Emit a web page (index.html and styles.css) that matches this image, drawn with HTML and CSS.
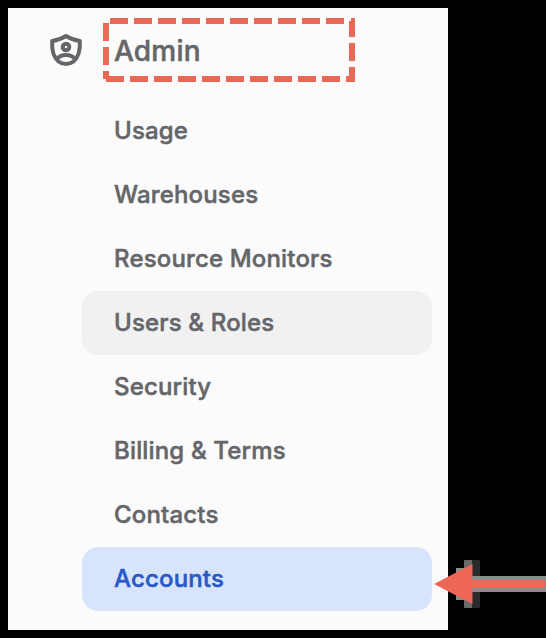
FILE: index.html
```
<!DOCTYPE html>
<html lang="en">
<head>
<meta charset="utf-8">
<title>Admin</title>
<link rel="stylesheet" href="styles.css">
</head>
<body>
<nav class="sidebar">
  <div class="section">
    <svg class="shield" width="34" height="36" viewBox="0 0 34 36" fill="none" stroke="currentColor" stroke-width="4" stroke-linejoin="round">
      <path d="M17 4C13.5 6.3 8.5 8.2 3.2 9C2.6 18 4.7 25.3 9.5 29.5Q12.6 32 17 32Q21.4 32 24.5 29.5C29.3 25.3 31.4 18 30.8 9C25.5 8.2 20.5 6.3 17 4Z"/>
      <circle cx="17" cy="15" r="3.3"/>
      <path d="M8.5 26.5Q11.5 23 17 23T25.5 26.5"/>
    </svg>
    <span class="title">Admin</span>
  </div>
  <ul class="items">
    <li class="item">Usage</li>
    <li class="item">Warehouses</li>
    <li class="item">Resource Monitors</li>
    <li class="item hovered">Users &amp; Roles</li>
    <li class="item">Security</li>
    <li class="item">Billing &amp; Terms</li>
    <li class="item">Contacts</li>
    <li class="item selected">Accounts</li>
  </ul>
</nav>
<svg class="highlight" width="252" height="64" viewBox="0 0 252 64" fill="none" stroke="#ea6856" stroke-width="6" stroke-dasharray="18 6">
  <path d="M7 3H247"/>
  <path d="M248 1.5H252" stroke-width="3"/>
  <path d="M249 3V64" stroke-dasharray="16 6 18 6 18"/>
  <path d="M3 61H252"/>
  <path d="M3 5V61"/>
</svg>
<svg class="arrow" width="114" height="50" viewBox="0 0 114 50" shape-rendering="crispEdges">
  <path fill="#8b8b8b" d="M48 17H114V33H48Z"/>
  <path fill="#8b8b8b" d="M24 9H32V41H24Z"/>
  <path fill="#6b6b6b" d="M32 1H40V49H32Z"/>
  <path fill="#2b2b2b" d="M40 1H48V49H40Z"/>
  <path fill="#8b8b8b" d="M40 17H48V33H40Z"/>
  <path fill="#ee6655" shape-rendering="auto" d="M2 25L40.5 5V21H112L114 23V27L112 29H40.5V45Z"/>
</svg>
</body>
</html>
```
FILE: styles.css
```
* {
  box-sizing: border-box;
}

body {
  position: relative;
  height: 638px;
  margin: 0;
  padding: 8px;
  overflow: hidden;
  background: #000;
  font-family: Inter, sans-serif;
  font-optical-sizing: none;
  -webkit-text-stroke: 0.5px currentColor;
  color: #656669;
}

.sidebar {
  width: 440px;
  height: 622px;
  padding: 9px 16px 0 41px;
  background: #fbfbfb;
}

.section {
  display: flex;
  align-items: center;
  height: 68px;
  gap: 31px;
}

.shield {
  flex: none;
  margin-bottom: 2px;
}

.title {
  font-size: 28px;
  font-weight: 500;
  line-height: 34px;
  letter-spacing: 0.2px;
}

.items {
  margin: 14px 0 0 33px;
  padding: 0;
  list-style: none;
}

.item {
  height: 64px;
  padding-left: 32px;
  border-radius: 16px;
  font-size: 24px;
  font-weight: 500;
  line-height: 64px;
  letter-spacing: 0.16px;
  white-space: nowrap;
}

.hovered {
  background: #f1f1f1;
}

.selected {
  background: #d8e4fc;
  color: #2859c5;
  -webkit-text-stroke-color: #2859c5;
}

.highlight {
  position: absolute;
  left: 103px;
  top: 18px;
}

.arrow {
  position: absolute;
  left: 432px;
  top: 559px;
}
```
